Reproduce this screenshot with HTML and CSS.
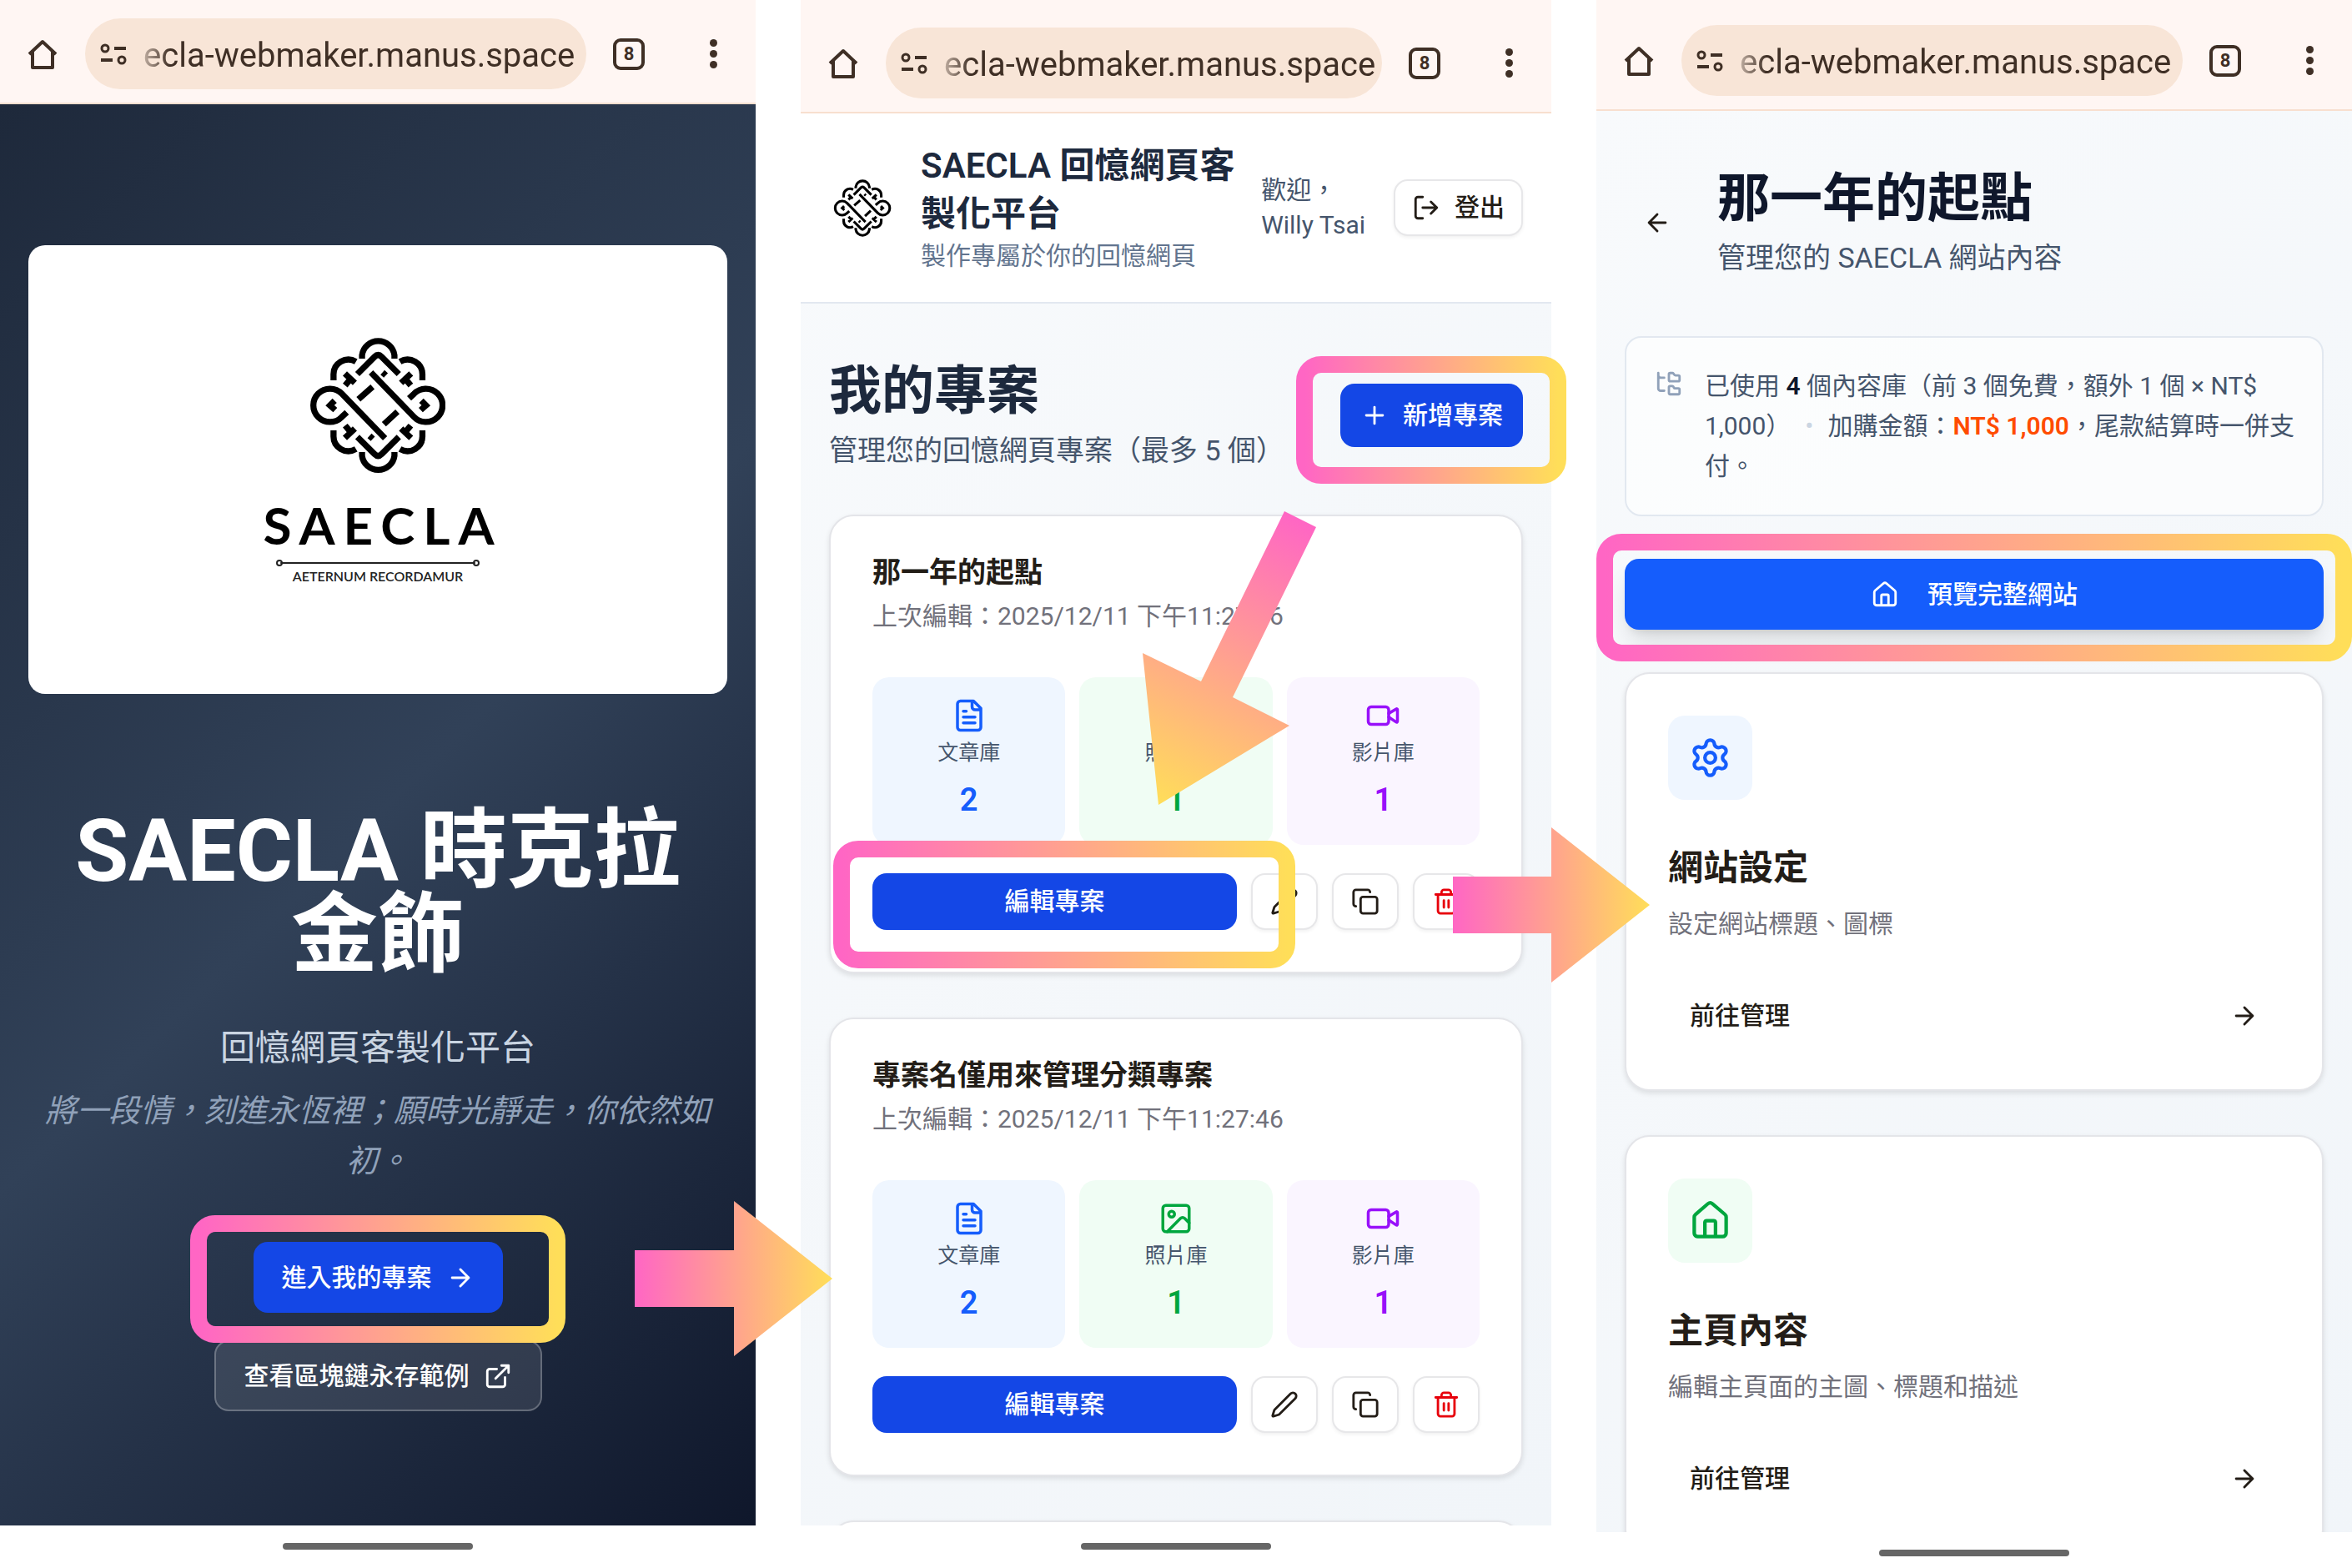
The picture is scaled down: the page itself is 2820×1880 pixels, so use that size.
FILE: index.html
```html
<!DOCTYPE html>
<html lang="zh-TW">
<head>
    <meta charset="UTF-8">
    <meta name="viewport" content="width=device-width, initial-scale=1.0">
    <title>SAECLA 回憶網頁客製化平台</title>
    <link rel="stylesheet" href="styles.css">
</head>
<body>
    <!-- Shared icons -->
    <svg class="sprite" aria-hidden="true">
        <symbol id="i-home-outline" viewBox="0 0 38 38"><path d="M3 19L19 4l16 15M7 16v19h24V16" stroke-width="4"/></symbol>
        <symbol id="i-site" viewBox="0 0 32 28"><path d="M17 7h14M1 21h14" stroke-width="4"/><circle cx="6" cy="7" r="4" stroke-width="3"/><circle cx="26" cy="21" r="4" stroke-width="3"/></symbol>
        <symbol id="i-arrow-right" viewBox="0 0 24 24"><path d="M5 12h14M12 5l7 7-7 7"/></symbol>
        <symbol id="i-arrow-left" viewBox="0 0 24 24"><path d="M12 19l-7-7 7-7M19 12H5"/></symbol>
        <symbol id="i-external" viewBox="0 0 24 24"><path d="M15 3h6v6M10 14L21 3M18 13v6a2 2 0 0 1-2 2H5a2 2 0 0 1-2-2V8a2 2 0 0 1 2-2h6"/></symbol>
        <symbol id="i-logout" viewBox="0 0 24 24"><path d="M16 17l5-5-5-5M21 12H9M9 21H5a2 2 0 0 1-2-2V5a2 2 0 0 1 2-2h4"/></symbol>
        <symbol id="i-plus" viewBox="0 0 24 24"><path d="M5 12h14M12 5v14"/></symbol>
        <symbol id="i-file" viewBox="0 0 24 24"><path d="M15 2H6a2 2 0 0 0-2 2v16a2 2 0 0 0 2 2h12a2 2 0 0 0 2-2V7zM14 2v4a2 2 0 0 0 2 2h4M10 9H8M16 13H8M16 17H8"/></symbol>
        <symbol id="i-image" viewBox="0 0 24 24"><rect x="3" y="3" width="18" height="18" rx="2"/><circle cx="9" cy="9" r="2"/><path d="M21 15l-3.086-3.086a2 2 0 0 0-2.828 0L6 21"/></symbol>
        <symbol id="i-video" viewBox="0 0 24 24"><path d="M16 13l5.223 3.482a.5.5 0 0 0 .777-.416V7.87a.5.5 0 0 0-.752-.432L16 10.5"/><rect x="2" y="6" width="14" height="12" rx="2"/></symbol>
        <symbol id="i-pencil" viewBox="0 0 24 24"><path d="M21.174 6.812a1 1 0 0 0-3.986-3.987L3.842 16.174a2 2 0 0 0-.5.83l-1.321 4.352a.5.5 0 0 0 .623.622l4.353-1.32a2 2 0 0 0 .83-.497z"/></symbol>
        <symbol id="i-copy" viewBox="0 0 24 24"><rect x="8" y="8" width="14" height="14" rx="2"/><path d="M4 16c-1.1 0-2-.9-2-2V4c0-1.1.9-2 2-2h10c1.1 0 2 .9 2 2"/></symbol>
        <symbol id="i-trash" viewBox="0 0 24 24"><path d="M3 6h18M19 6v14c0 1-1 2-2 2H7c-1 0-2-1-2-2V6M8 6V4c0-1 1-2 2-2h4c1 0 2 1 2 2v2M10 11v6M14 11v6"/></symbol>
        <symbol id="i-tree" viewBox="0 0 24 24"><path d="M20 10a1 1 0 0 0 1-1V6a1 1 0 0 0-1-1h-2.500a1 1 0 0 1-.8-.4l-.9-1.200A1 1 0 0 0 15 3h-2a1 1 0 0 0-1 1v5a1 1 0 0 0 1 1ZM20 21a1 1 0 0 0 1-1v-3a1 1 0 0 0-1-1h-2.900a1 1 0 0 1-.88-.55l-.42-.85a1 1 0 0 0-.92-.6H13a1 1 0 0 0-1 1v5a1 1 0 0 0 1 1ZM3 5a2 2 0 0 0 2 2h3M3 3v13a2 2 0 0 0 2 2h3"/></symbol>
        <symbol id="i-house" viewBox="0 0 24 24"><path d="M15 21v-8a1 1 0 0 0-1-1h-4a1 1 0 0 0-1 1v8M3 10a2 2 0 0 1 .709-1.528l7-5.999a2 2 0 0 1 2.582 0l7 5.999A2 2 0 0 1 21 10v9a2 2 0 0 1-2 2H5a2 2 0 0 1-2-2z"/></symbol>
        <symbol id="i-gear" viewBox="0 0 24 24"><path d="M9.671 4.136a2.340 2.340 0 0 1 4.659 0 2.340 2.340 0 0 0 3.319 1.915 2.340 2.340 0 0 1 2.330 4.033 2.340 2.340 0 0 0 0 3.831 2.340 2.340 0 0 1-2.330 4.033 2.340 2.340 0 0 0-3.319 1.915 2.340 2.340 0 0 1-4.659 0 2.340 2.340 0 0 0-3.320-1.915 2.340 2.340 0 0 1-2.330-4.033 2.340 2.340 0 0 0 0-3.831A2.340 2.340 0 0 1 6.350 6.051a2.340 2.340 0 0 0 3.319-1.915"/><circle cx="12" cy="12" r="3"/></symbol>
        <symbol id="i-knot" viewBox="280 68 488 506">
            <path d="M467 152v-12a59 59 0 0 1 117 0v12M467 490v13a59 59 0 0 0 117 0v-13"/>
            <path d="M450 208l62-62q13-13 26 0l62 62M450 435l62 62q13 13 26 0l62-62"/>
            <path d="M364 231v-19a54 54 0 0 1 81-49M685 231v-19a54 54 0 0 0-81-49M364 411v19a54 54 0 0 0 81 49M685 411v19a54 54 0 0 1-81 49"/>
            <path d="M550 440L394 279a60 60 0 1 0 0 84l18-17M499 202l156 161a60 60 0 1 0 0-84l-18 17"/>
            <path d="M454 299l51-45M546 389l49-45M541 202l12 11M494 431l12 11"/>
            <path d="M405 206l36 34M406 249l20-24M644 206l-36 34M643 249l-20-24M405 439l36-34M406 394l20 24M644 439l-36-34M643 394l-20 24"/>
            <path d="M368 304l-17 17 19 17M681 304l17 17-19 17"/>
        </symbol>
    </svg>

    <main class="board">
        <!-- Landing page -->
        <section class="phone phone-landing">
            <div class="browser-bar">
                <button class="bar-button" aria-label="首頁"><svg class="icon-home"><use href="#i-home-outline"/></svg></button>
                <div class="address">
                    <svg class="icon-site"><use href="#i-site"/></svg>
                    <input class="url" type="text" aria-label="網址" value="ecla-webmaker.manus.space">
                </div>
                <button class="tab-count">8</button>
                <button class="more" aria-label="更多"><span></span><span></span><span></span></button>
            </div>
            <div class="screen landing">
                <div class="brand-card">
                    <svg class="brand-knot knot"><use href="#i-knot"/></svg>
                    <div class="brand-name">SAECLA</div>
                    <svg class="brand-rule" viewBox="0 0 244 10"><path d="M6 5h232"/><circle cx="4" cy="5" r="3"/><circle cx="240" cy="5" r="3"/></svg>
                    <div class="brand-motto">AETERNUM RECORDAMUR</div>
                </div>
                <h1>SAECLA 時克拉金飾</h1>
                <p class="tagline">回憶網頁客製化平台</p>
                <p class="poem">將一段情，刻進永恆裡；願時光靜走，你依然如初。</p>
                <a class="btn btn-primary btn-large" href="#projects">進入我的專案<svg class="icon"><use href="#i-arrow-right"/></svg></a>
                <a class="btn btn-glass btn-large" href="#sample">查看區塊鏈永存範例<svg class="icon"><use href="#i-external"/></svg></a>
            </div>
            <div class="gesture-bar"><span></span></div>
        </section>

        <!-- Project list -->
        <section class="phone phone-projects" id="projects">
            <div class="browser-bar">
                <button class="bar-button" aria-label="首頁"><svg class="icon-home"><use href="#i-home-outline"/></svg></button>
                <div class="address">
                    <svg class="icon-site"><use href="#i-site"/></svg>
                    <input class="url" type="text" aria-label="網址" value="ecla-webmaker.manus.space">
                </div>
                <button class="tab-count">8</button>
                <button class="more" aria-label="更多"><span></span><span></span><span></span></button>
            </div>
            <div class="screen light">
                <header class="app-header">
                    <div class="app-brand">
                        <svg class="app-logo knot"><use href="#i-knot"/></svg>
                        <div>
                            <h2 class="app-title">SAECLA 回憶網頁客製化平台</h2>
                            <p class="app-subtitle">製作專屬於你的回憶網頁</p>
                        </div>
                    </div>
                    <div class="app-user">
                        <p>歡迎，<br>Willy Tsai</p>
                        <button class="btn btn-outline"><svg class="icon"><use href="#i-logout"/></svg>登出</button>
                    </div>
                </header>
                <div class="content">
                    <div class="page-head">
                        <div>
                            <h2 class="page-title">我的專案</h2>
                            <p class="page-subtitle">管理您的回憶網頁專案（最多 5 個）</p>
                        </div>
                        <button class="btn btn-primary btn-add"><svg class="icon"><use href="#i-plus"/></svg>新增專案</button>
                    </div>
                    <div class="card-list">
                        <article class="card">
                            <h3 class="project-name">那一年的起點</h3>
                            <p class="project-date">上次編輯：2025/12/11 下午11:27:46</p>
                            <div class="stats">
                                <div class="stat blue"><svg class="icon"><use href="#i-file"/></svg><span class="stat-label">文章庫</span><span class="stat-value">2</span></div>
                                <div class="stat green"><svg class="icon"><use href="#i-image"/></svg><span class="stat-label">照片庫</span><span class="stat-value">1</span></div>
                                <div class="stat purple"><svg class="icon"><use href="#i-video"/></svg><span class="stat-label">影片庫</span><span class="stat-value">1</span></div>
                            </div>
                            <div class="actions">
                                <button class="btn btn-primary">編輯專案</button>
                                <button class="btn btn-outline btn-icon" aria-label="重新命名"><svg class="icon"><use href="#i-pencil"/></svg></button>
                                <button class="btn btn-outline btn-icon" aria-label="複製"><svg class="icon"><use href="#i-copy"/></svg></button>
                                <button class="btn btn-outline btn-icon danger" aria-label="刪除"><svg class="icon"><use href="#i-trash"/></svg></button>
                            </div>
                        </article>
                        <article class="card">
                            <h3 class="project-name">專案名僅用來管理分類專案</h3>
                            <p class="project-date">上次編輯：2025/12/11 下午11:27:46</p>
                            <div class="stats">
                                <div class="stat blue"><svg class="icon"><use href="#i-file"/></svg><span class="stat-label">文章庫</span><span class="stat-value">2</span></div>
                                <div class="stat green"><svg class="icon"><use href="#i-image"/></svg><span class="stat-label">照片庫</span><span class="stat-value">1</span></div>
                                <div class="stat purple"><svg class="icon"><use href="#i-video"/></svg><span class="stat-label">影片庫</span><span class="stat-value">1</span></div>
                            </div>
                            <div class="actions">
                                <button class="btn btn-primary">編輯專案</button>
                                <button class="btn btn-outline btn-icon" aria-label="重新命名"><svg class="icon"><use href="#i-pencil"/></svg></button>
                                <button class="btn btn-outline btn-icon" aria-label="複製"><svg class="icon"><use href="#i-copy"/></svg></button>
                                <button class="btn btn-outline btn-icon danger" aria-label="刪除"><svg class="icon"><use href="#i-trash"/></svg></button>
                            </div>
                        </article>
                        <article class="card"></article>
                    </div>
                </div>
            </div>
            <div class="gesture-bar"><span></span></div>
        </section>

        <!-- Project dashboard -->
        <section class="phone phone-site">
            <div class="browser-bar">
                <button class="bar-button" aria-label="首頁"><svg class="icon-home"><use href="#i-home-outline"/></svg></button>
                <div class="address">
                    <svg class="icon-site"><use href="#i-site"/></svg>
                    <input class="url" type="text" aria-label="網址" value="ecla-webmaker.manus.space">
                </div>
                <button class="tab-count">8</button>
                <button class="more" aria-label="更多"><span></span><span></span><span></span></button>
            </div>
            <div class="screen light">
                <div class="content">
                    <div class="site-head">
                        <button class="back" aria-label="返回"><svg class="icon"><use href="#i-arrow-left"/></svg></button>
                        <div>
                            <h2 class="page-title dark">那一年的起點</h2>
                            <p class="page-subtitle">管理您的 SAECLA 網站內容</p>
                        </div>
                    </div>
                    <div class="notice">
                        <svg class="icon"><use href="#i-tree"/></svg>
                        <p>已使用 <strong>4</strong> 個內容庫（前 3 個免費，額外 1 個 × NT$ 1,000）<span class="dot">•</span>加購金額：<strong class="price">NT$ 1,000</strong>，尾款結算時一併支付。</p>
                    </div>
                    <a class="btn btn-preview btn-large" href="#preview"><svg class="icon"><use href="#i-house"/></svg>預覽完整網站</a>
                    <div class="card-list">
                        <article class="card">
                            <div class="tile blue"><svg class="icon"><use href="#i-gear"/></svg></div>
                            <h3 class="section-name">網站設定</h3>
                            <p class="section-text">設定網站標題、圖標</p>
                            <a class="manage" href="#settings">前往管理<svg class="icon"><use href="#i-arrow-right"/></svg></a>
                        </article>
                        <article class="card">
                            <div class="tile green"><svg class="icon"><use href="#i-house"/></svg></div>
                            <h3 class="section-name">主頁內容</h3>
                            <p class="section-text">編輯主頁面的主圖、標題和描述</p>
                            <a class="manage" href="#home">前往管理<svg class="icon"><use href="#i-arrow-right"/></svg></a>
                        </article>
                    </div>
                </div>
            </div>
            <div class="gesture-bar"><span></span></div>
        </section>

        <!-- Guide marks: highlight frames and arrows over the three screens -->
        <svg class="guide" viewBox="0 0 2820 1880" aria-hidden="true">
            <defs>
                <linearGradient id="warm"><stop offset="0" stop-color="#ff66c4"/><stop offset="1" stop-color="#ffde59"/></linearGradient>
                <linearGradient id="warm-down" gradientUnits="userSpaceOnUse" x1="1559" y1="623" x2="1389" y2="965"><stop offset="0" stop-color="#ff66c4"/><stop offset="1" stop-color="#ffde59"/></linearGradient>
            </defs>
            <g class="frames">
                <rect x="238" y="1467" width="430" height="133" rx="20"/>
                <rect x="1564" y="437" width="304" height="133" rx="20"/>
                <rect x="1009" y="1018" width="534" height="133" rx="20"/>
                <rect x="1924" y="650" width="886" height="133" rx="20"/>
            </g>
            <g class="arrows">
                <path d="M761 1499h119v-59l118 93-118 93v-59H761z"/>
                <path d="M1742 1051h118v-59l118 93-118 93v-59h-118z"/>
                <path class="down" d="M1540 613l38 19-100 204 68 34-157 95-19-182 70 34z"/>
            </g>
        </svg>
    </main>
</body>
</html>
```
FILE: styles.css
```css
* {
    box-sizing: border-box;
}

body {
    margin: 0;
    background: #fff;
    color: #231d17;
    font-family: Roboto, "Noto Sans CJK TC", sans-serif;
    font-size: 30px;
    line-height: 42px;
}

h1, h2, h3, p {
    margin: 0;
}

a {
    color: inherit;
    text-decoration: none;
}

button, input {
    font: inherit;
    color: inherit;
    border: 0;
    padding: 0;
    background: none;
}

button {
    cursor: pointer;
}

svg {
    display: block;
    flex: none;
    fill: none;
    stroke: currentColor;
    stroke-width: 2;
    stroke-linecap: round;
    stroke-linejoin: round;
}

.sprite {
    position: absolute;
    width: 0;
    height: 0;
}

.icon {
    width: 34px;
    height: 34px;
}

.knot {
    color: #000;
    stroke-width: 22;
    stroke-linecap: butt;
    stroke-linejoin: miter;
}

/* Board with three phones */
.board {
    position: relative;
    display: grid;
    grid-template-columns: 906fr 900fr 906fr;
    gap: 54px;
    height: 100vh;
    overflow: hidden;
}

.phone {
    display: flex;
    flex-direction: column;
    min-width: 0;
    min-height: 0;
}

.screen {
    flex: 1;
    min-height: 0;
    overflow: hidden;
}

/* Browser bar */
.browser-bar {
    display: flex;
    align-items: center;
    padding: 22px 46px 16px 32px;
    background: #fff6f3;
    border-bottom: 2px solid #f8dfcf;
    color: #3f2f25;
}

.phone-projects .browser-bar {
    padding-top: 33px;
}

.phone-site .browser-bar {
    padding-top: 30px;
}

.icon-home {
    width: 38px;
    height: 38px;
    stroke-linecap: butt;
}

.address {
    flex: 1;
    display: flex;
    align-items: center;
    gap: 20px;
    min-width: 0;
    height: 85px;
    margin: 0 32px;
    padding: 0 8px 0 18px;
    border-radius: 43px;
    background: #f8e5d7;
}

.icon-site {
    width: 32px;
    height: 28px;
    stroke-linecap: butt;
}

.url {
    flex: 1;
    min-width: 0;
    height: 60px;
    padding-top: 4px;
    font-size: 40px;
    outline: none;
    -webkit-mask-image: linear-gradient(to right, rgba(0, 0, 0, 0.3), #000 32px);
    mask-image: linear-gradient(to right, rgba(0, 0, 0, 0.3), #000 32px);
}

.tab-count {
    width: 38px;
    height: 38px;
    border: 4px solid #3f2f25;
    border-radius: 9px;
    font-size: 22px;
    font-weight: 700;
    line-height: 30px;
}

.more {
    display: flex;
    flex-direction: column;
    gap: 4px;
    margin-left: 78px;
}

.more span {
    width: 9px;
    height: 9px;
    border-radius: 50%;
    background: #3f2f25;
}

/* Gesture bar */
.gesture-bar {
    height: 51px;
    padding-top: 21px;
    background: #fff;
}

.phone-site .gesture-bar {
    height: 43px;
}

.gesture-bar span {
    display: block;
    width: 228px;
    height: 8px;
    margin: 0 auto;
    border-radius: 4px;
    background: #666;
}

/* Buttons */
.btn {
    display: inline-flex;
    align-items: center;
    justify-content: center;
    gap: 17px;
    height: 68px;
    border-radius: 17px;
    font-weight: 500;
    white-space: nowrap;
}

.btn-large {
    height: 85px;
    padding: 0 34px;
}

.btn-primary {
    background: #1447e6;
    color: #fff;
}

.btn-add {
    height: 76px;
    padding: 0 24px;
}

.btn-outline {
    padding: 0 20px;
    border: 2px solid #e7e7e9;
    background: #fff;
    box-shadow: 0 2px 4px rgba(0, 0, 0, 0.06);
}

.btn-icon {
    flex: none;
    width: 80px;
    padding: 0;
}

.btn-icon.danger {
    color: #e7000b;
}

.btn-glass {
    border: 2px solid rgba(255, 255, 255, 0.25);
    background: rgba(255, 255, 255, 0.1);
    color: #fff;
}

.btn-preview {
    width: 100%;
    gap: 34px;
    margin: 51px 0;
    background: #155dfc;
    color: #fff;
    box-shadow: 0 20px 30px -6px rgba(0, 0, 0, 0.12), 0 8px 12px -8px rgba(0, 0, 0, 0.15);
}

/* Landing page */
.landing {
    display: flex;
    flex-direction: column;
    align-items: center;
    padding: 169px 34px 0;
    background: linear-gradient(135deg, #1e293b, #314158 50%, #0f172b);
    color: #fff;
    text-align: center;
}

.brand-card {
    display: flex;
    flex-direction: column;
    align-items: center;
    width: 100%;
    padding: 108px 0 132px;
    border-radius: 20px;
    background: #fff;
    color: #000;
}

.brand-knot {
    width: 162px;
    height: 168px;
}

.brand-name {
    margin-top: 28px;
    padding-left: 12px;
    font-family: Lato, sans-serif;
    font-size: 62px;
    font-weight: 700;
    letter-spacing: 10px;
    line-height: 62px;
}

.brand-rule {
    width: 244px;
    height: 10px;
    margin-top: 10px;
    color: #222;
}

.brand-motto {
    margin-top: 2px;
    color: #222;
    font-family: Lato, sans-serif;
    font-size: 16px;
    font-weight: 600;
    line-height: 18px;
}

.landing h1 {
    margin-top: 138px;
    padding: 0 34px;
    font-size: 104px;
    font-weight: 700;
    line-height: 101px;
}

.tagline {
    margin-top: 55px;
    color: #cad5e2;
    font-size: 42px;
    line-height: 60px;
}

.poem {
    margin: 15px 0 67px;
    color: #90a1b9;
    font-size: 38px;
    font-style: italic;
    line-height: 60px;
}

.btn-glass {
    margin-top: 33px;
}

/* App header */
.light {
    background: linear-gradient(135deg, #f8fafc, #f1f5f9);
}

.app-header {
    display: flex;
    align-items: center;
    justify-content: space-between;
    gap: 24px;
    padding: 34px;
    border-bottom: 2px solid #e2e8f0;
    background: #fff;
}

.app-brand,
.app-user {
    display: flex;
    align-items: center;
}

.app-brand {
    gap: 30px;
}

.app-logo {
    width: 80px;
    height: 71px;
}

.app-title {
    color: #1d293d;
    font-size: 42px;
    font-weight: 600;
    line-height: 58px;
}

.app-subtitle {
    color: #62748e;
}

.app-user {
    flex: none;
    gap: 34px;
    color: #45556c;
}

.app-user .btn {
    color: #231d17;
}

/* Page content */
.content {
    padding: 67px 34px 0;
}

.page-head {
    display: flex;
    align-items: center;
    justify-content: space-between;
    margin-bottom: 52px;
}

.page-title {
    color: #1d293d;
    font-size: 63px;
    font-weight: 700;
    line-height: 76px;
}

.page-title.dark {
    color: #0f172b;
}

.page-subtitle {
    margin-top: 8px;
    color: #45556c;
    font-size: 34px;
    line-height: 50px;
}

.card-list {
    display: flex;
    flex-direction: column;
    gap: 53px;
}

.card {
    padding: 50px;
    border: 2px solid #e4e5e9;
    border-radius: 30px;
    background: #fff;
    box-shadow: 0 3px 6px rgba(0, 0, 0, 0.1);
}

/* Project card */
.project-name {
    font-size: 34px;
    font-weight: 600;
    line-height: 34px;
}

.project-date {
    margin: 15px 0 52px;
    color: #71717b;
}

.stats {
    display: grid;
    grid-template-columns: repeat(3, 1fr);
    gap: 17px;
}

.stat {
    display: flex;
    flex-direction: column;
    align-items: center;
    padding: 25px 0 29px;
    border-radius: 20px;
}

.stat .icon {
    width: 42px;
    height: 42px;
}

.stat-label {
    margin: 7px 0 14px;
    color: #45556c;
    font-size: 25px;
    line-height: 34px;
}

.stat-value {
    font-size: 38px;
    font-weight: 600;
    line-height: 50px;
}

.blue {
    background: #eff6ff;
    color: #155dfc;
}

.green {
    background: #f0fdf4;
    color: #00a63e;
}

.purple {
    background: #faf5ff;
    color: #9810fa;
}

.actions {
    display: flex;
    gap: 17px;
    margin-top: 34px;
}

.actions .btn-primary {
    flex: 1;
}

/* Project dashboard */
.site-head {
    display: flex;
    align-items: center;
    gap: 33px;
}

.back {
    display: flex;
    justify-content: center;
    width: 78px;
}

.notice {
    display: flex;
    gap: 26px;
    margin-top: 69px;
    padding: 34px 30px 34px 34px;
    border: 2px solid #e2e8f0;
    border-radius: 20px;
    background: rgba(255, 255, 255, 0.6);
    color: #45556c;
    line-height: 48px;
}

.notice .icon {
    margin-top: 4px;
    color: #90a1b9;
}

.notice strong {
    color: #0f172b;
    font-weight: 600;
}

.notice .price {
    color: #ff4c00;
}

.notice .dot {
    margin: 0 17px;
    color: #cad5e2;
}

.tile {
    display: flex;
    align-items: center;
    justify-content: center;
    width: 101px;
    height: 101px;
    border-radius: 20px;
}

.tile .icon {
    width: 51px;
    height: 51px;
}

.section-name {
    margin-top: 54px;
    font-size: 42px;
    font-weight: 600;
    line-height: 56px;
}

.section-text {
    margin: 18px 0 51px;
    color: #71717b;
}

.manage {
    display: flex;
    align-items: center;
    justify-content: space-between;
    height: 76px;
    padding: 0 26px;
    font-weight: 500;
}

/* Guide marks */
.guide {
    position: absolute;
    top: 0;
    left: 0;
    width: 100%;
    pointer-events: none;
}

.frames {
    stroke: url(#warm);
    stroke-width: 20;
}

.arrows {
    fill: url(#warm);
    stroke: none;
}

.arrows .down {
    fill: url(#warm-down);
}
```
